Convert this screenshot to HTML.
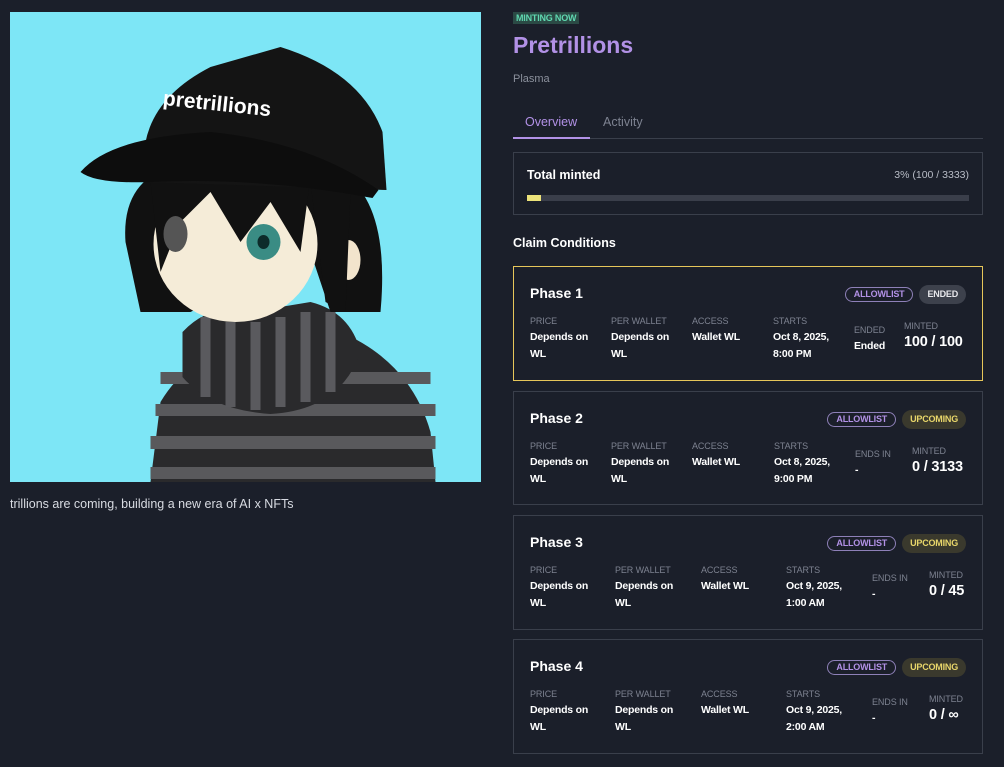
<!DOCTYPE html>
<html><head><meta charset="utf-8"><style>
*{box-sizing:border-box;margin:0;padding:0}
body{width:1004px;height:767px;background:#1b1f2a;font-family:"Liberation Sans",sans-serif;color:#fff;position:relative;overflow:hidden}
.abs{position:absolute}
.img{left:10px;top:12px;width:471px;height:470px;background:#7de6f6;overflow:hidden}
.desc{left:10px;top:497px;font-size:12.5px;color:#d8dbe2}
.badge{left:513px;top:12px;background:#2b4a45;color:#5fd8b0;font-size:9px;font-weight:bold;padding:1px 3px;letter-spacing:-.2px}
h1{position:absolute;left:513px;top:32px;font-size:23px;color:#b291e6;font-weight:bold}
.plasma{left:513px;top:73px;font-size:11px;color:#8b909c}
.tab1{left:525px;top:115px;font-size:12.5px;color:#b291e6}
.tab2{left:603px;top:115px;font-size:12.5px;color:#7d8290}
.tabline{left:513px;top:138px;width:470px;height:1px;background:#3a3f4b}
.tabsel{left:513px;top:137px;width:77px;height:2px;background:#b291e6}
.box{left:513px;top:152px;width:470px;height:63px;border:1px solid #3a3f4b}
.cc{left:513px;top:236px;font-size:12.5px;font-weight:bold}
.card{position:absolute;left:513px;width:470px;border:1px solid #3a3f4b}
.card.act{border-color:#e6c65a}
.ph{position:absolute;left:16px;top:18px;font-size:14px;font-weight:bold}
.tags{position:absolute;right:16px;top:18px;display:flex;gap:6px;align-items:center}
.al{border:1px solid #8e80b8;color:#b291e6;font-size:9px;font-weight:bold;border-radius:8px;padding:1px 8px;line-height:11px;letter-spacing:-.2px}
.st{font-size:9px;font-weight:bold;border-radius:10px;padding:4px 8px;line-height:11px;letter-spacing:-.2px}
.en{background:#3d414c;color:#e8e8ec}
.up{background:#3a392d;color:#e8d66a}
.col{position:absolute;font-size:9px;color:#7d8290;letter-spacing:-.1px}
.col b{display:block;color:#fff;font-size:10.5px;line-height:17px;margin-top:3px;font-weight:bold;letter-spacing:-.2px}
.col b.big{font-size:14.5px}
</style></head><body>
<div class="abs img">
<svg width="471" height="470" viewBox="0 0 470 470">
<path d="M140 470 L150 390 Q180 340 240 330 L330 320 Q400 350 420 420 L425 470 Z" fill="#2a2a2c"/>
<g fill="#59595c">
<rect x="150" y="360" width="270" height="12"/><rect x="145" y="392" width="280" height="12"/><rect x="140" y="424" width="285" height="13"/><rect x="140" y="455" width="285" height="12"/>
</g>
<path d="M172 320 Q200 290 240 300 L300 290 Q340 300 350 340 Q330 398 260 402 Q200 398 172 365 Z" fill="#2a2a2c"/>
<g fill="#5a5a5e"><rect x="190" y="305" width="10" height="80"/><rect x="215" y="310" width="10" height="85"/><rect x="240" y="310" width="10" height="88"/><rect x="265" y="305" width="10" height="90"/><rect x="290" y="300" width="10" height="90"/><rect x="315" y="300" width="10" height="80"/></g>
<path d="M115 230 Q110 160 180 150 L330 160 Q380 190 370 300 L320 300 L300 240 L180 300 L130 300 Z" fill="#111"/>
<ellipse cx="225" cy="232" rx="82" ry="78" fill="#f5ecd8"/>
<ellipse cx="338" cy="248" rx="12" ry="20" fill="#f2e4cc"/>
<path d="M140 170 L300 165 L290 240 L260 190 L230 230 L200 180 L170 210 L150 260 Z" fill="#111"/>
<path d="M300 170 L340 180 L335 300 L315 290 Z" fill="#111"/>
<ellipse cx="165" cy="222" rx="12" ry="18" fill="#555"/>
<ellipse cx="253" cy="230" rx="17" ry="18" fill="#3a8c84"/>
<ellipse cx="253" cy="230" rx="6" ry="7" fill="#0d2b2a"/>
<path d="M135 170 Q122 95 200 55 L270 35 Q350 60 372 120 L376 178 Z" fill="#141414"/>
<path d="M70 160 Q100 125 200 120 Q300 130 368 178 L362 186 Q250 165 140 170 Q85 172 70 160 Z" fill="#0d0d0d"/>
<text x="152" y="99" font-family="Liberation Sans" font-weight="bold" font-size="21" fill="#fff" transform="rotate(6 210 95)">pretrillions</text>
</svg>
</div>
<div class="abs desc">trillions are coming, building a new era of AI x NFTs</div>
<div class="abs badge">MINTING NOW</div>
<h1>Pretrillions</h1>
<div class="abs plasma">Plasma</div>
<div class="abs tab1">Overview</div><div class="abs tab2">Activity</div>
<div class="abs tabline"></div><div class="abs tabsel"></div>
<div class="abs box">
<div class="abs" style="left:13px;top:15px;font-size:12.5px;font-weight:bold">Total minted</div>
<div class="abs" style="right:13px;top:16px;font-size:10.5px;color:#b8bcc6">3% (100 / 3333)</div>
<div class="abs" style="left:13px;top:42px;width:442px;height:6px;background:#3a3e4a"></div>
<div class="abs" style="left:13px;top:42px;width:14px;height:6px;background:#ece27a"></div>
</div>
<div class="abs cc">Claim Conditions</div>

<div class="card act" style="top:266px;height:115px">
<div class="ph">Phase 1</div>
<div class="tags"><span class="al">ALLOWLIST</span><span class="st en">ENDED</span></div>
<div class="col" style="left:16px;top:49px">PRICE<b>Depends on<br>WL</b></div>
<div class="col" style="left:97px;top:49px">PER WALLET<b>Depends on<br>WL</b></div>
<div class="col" style="left:178px;top:49px">ACCESS<b>Wallet WL</b></div>
<div class="col" style="left:259px;top:49px">STARTS<b>Oct 8, 2025,<br>8:00 PM</b></div>
<div class="col" style="left:340px;top:58px">ENDED<b>Ended</b></div>
<div class="col" style="left:390px;top:54px">MINTED<b class="big">100 / 100</b></div>
</div>

<div class="card" style="top:391px;height:114px">
<div class="ph">Phase 2</div>
<div class="tags"><span class="al">ALLOWLIST</span><span class="st up">UPCOMING</span></div>
<div class="col" style="left:16px;top:49px">PRICE<b>Depends on<br>WL</b></div>
<div class="col" style="left:97px;top:49px">PER WALLET<b>Depends on<br>WL</b></div>
<div class="col" style="left:178px;top:49px">ACCESS<b>Wallet WL</b></div>
<div class="col" style="left:260px;top:49px">STARTS<b>Oct 8, 2025,<br>9:00 PM</b></div>
<div class="col" style="left:341px;top:57px">ENDS IN<b>-</b></div>
<div class="col" style="left:398px;top:54px">MINTED<b class="big">0 / 3133</b></div>
</div>

<div class="card" style="top:515px;height:115px">
<div class="ph">Phase 3</div>
<div class="tags"><span class="al">ALLOWLIST</span><span class="st up">UPCOMING</span></div>
<div class="col" style="left:16px;top:49px">PRICE<b>Depends on<br>WL</b></div>
<div class="col" style="left:101px;top:49px">PER WALLET<b>Depends on<br>WL</b></div>
<div class="col" style="left:187px;top:49px">ACCESS<b>Wallet WL</b></div>
<div class="col" style="left:272px;top:49px">STARTS<b>Oct 9, 2025,<br>1:00 AM</b></div>
<div class="col" style="left:358px;top:57px">ENDS IN<b>-</b></div>
<div class="col" style="left:415px;top:54px">MINTED<b class="big">0 / 45</b></div>
</div>

<div class="card" style="top:639px;height:115px">
<div class="ph">Phase 4</div>
<div class="tags"><span class="al">ALLOWLIST</span><span class="st up">UPCOMING</span></div>
<div class="col" style="left:16px;top:49px">PRICE<b>Depends on<br>WL</b></div>
<div class="col" style="left:101px;top:49px">PER WALLET<b>Depends on<br>WL</b></div>
<div class="col" style="left:187px;top:49px">ACCESS<b>Wallet WL</b></div>
<div class="col" style="left:272px;top:49px">STARTS<b>Oct 9, 2025,<br>2:00 AM</b></div>
<div class="col" style="left:358px;top:57px">ENDS IN<b>-</b></div>
<div class="col" style="left:415px;top:54px">MINTED<b class="big">0 / ∞</b></div>
</div>
</body></html>
